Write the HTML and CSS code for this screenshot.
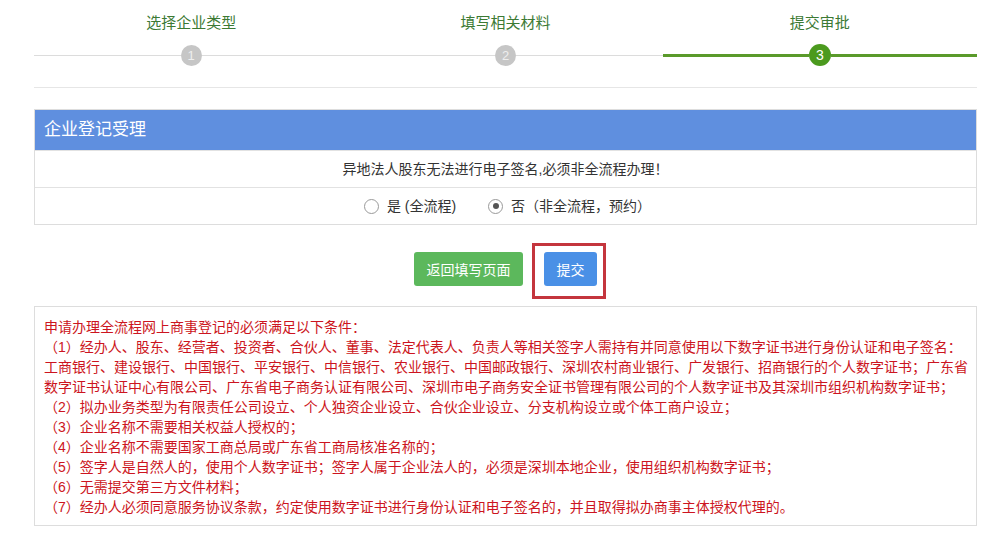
FILE: index.html
```html
<!DOCTYPE html>
<html><head>
<meta charset="utf-8">
<meta name="viewport" content="width=device-width, initial-scale=1.0">
<title>企业登记受理</title>
<link rel="stylesheet" href="styles.css">
</head>
<body>
<div class="page">
  <div class="steps">
    <div class="step">
      <div class="step_label">选择企业类型</div>
      <div class="step_track"><span class="seg"></span><span class="dot">1</span><span class="seg"></span></div>
    </div>
    <div class="step">
      <div class="step_label">填写相关材料</div>
      <div class="step_track"><span class="seg"></span><span class="dot">2</span><span class="seg"></span></div>
    </div>
    <div class="step on">
      <div class="step_label">提交审批</div>
      <div class="step_track"><span class="seg"></span><span class="dot">3</span><span class="seg"></span></div>
    </div>
  </div>
  <div class="rule"></div>

  <div class="panel">
    <div class="panel_head">企业登记受理</div>
    <div class="panel_row">异地法人股东无法进行电子签名,必须非全流程办理！</div>
    <div class="panel_row radios">
      <label class="opt"><span class="radio"></span>是 (全流程)</label>
      <label class="opt"><span class="radio checked"></span>否（非全流程，预约）</label>
    </div>
  </div>

  <div class="actions">
    <button class="btn btn_green">返回填写页面</button>
    <button class="btn btn_blue marked">提交</button>
  </div>

  <div class="notice">
    申请办理全流程网上商事登记的必须满足以下条件：<br>
    （1）经办人、股东、经营者、投资者、合伙人、董事、法定代表人、负责人等相关签字人需持有并同意使用以下数字证书进行身份认证和电子签名：<br>
    工商银行、建设银行、中国银行、平安银行、中信银行、农业银行、中国邮政银行、深圳农村商业银行、广发银行、招商银行的个人数字证书；广东省<br>数字证书认证中心有限公司、广东省电子商务认证有限公司、深圳市电子商务安全证书管理有限公司的个人数字证书及其深圳市组织机构数字证书；<br>
    （2）拟办业务类型为有限责任公司设立、个人独资企业设立、合伙企业设立、分支机构设立或个体工商户设立；<br>
    （3）企业名称不需要相关权益人授权的；<br>
    （4）企业名称不需要国家工商总局或广东省工商局核准名称的；<br>
    （5）签字人是自然人的，使用个人数字证书；签字人属于企业法人的，必须是深圳本地企业，使用组织机构数字证书；<br>
    （6）无需提交第三方文件材料；<br>
    （7）经办人必须同意服务协议条款，约定使用数字证书进行身份认证和电子签名的，并且取得拟办商事主体授权代理的。
  </div>
</div>
</body>
</html>
```

FILE: styles.css
```css
body {
  margin: 0;
  background: #fff;
  font-family: "Liberation Sans", "Noto Sans CJK SC", sans-serif;
  font-size: 14px;
  color: #333;
}
.page { padding: 0 31px 0 34px; }

/* steps */
.steps { display: grid; grid-template-columns: 1fr 1fr 1fr; }
.step { display: flex; flex-direction: column; align-items: stretch; }
.step_label {
  margin-top: 13px;
  line-height: 20px;
  font-size: 15px;
  color: #3c7a34;
  text-align: center;
}
.step_track {
  margin-top: 11px;
  height: 22px;
  display: flex;
  align-items: center;
}
.seg { flex: 1; height: 1px; background: #dcdcdc; }
.dot {
  width: 21px; height: 21px;
  border-radius: 50%;
  background: #c6c6c6;
  color: #eee;
  font-size: 13px;
  line-height: 21px;
  text-align: center;
}
.step.on .seg { height: 3px; background: #5a9a2a; }
.step.on .dot {
  width: 22px; height: 22px; line-height: 22px;
  background: #4b9a1e;
  color: #fff;
  font-size: 14px;
}
.rule { margin-top: 21px; height: 1px; background: #e6e6e6; }

/* panel */
.panel { margin-top: 21px; border: 1px solid #dddddd; }
.panel_head {
  background: #5f8fdf;
  color: #fff;
  font-size: 17px;
  height: 40px;
  line-height: 40px;
  padding-left: 9px;
}
.panel_row {
  height: 36px;
  line-height: 36px;
  text-align: center;
  border-top: 1px solid #e2e2e2;
}
.radios { display: flex; justify-content: center; gap: 32px; padding-left: 4px; }
.opt { display: flex; align-items: center; gap: 8px; }
.radio {
  width: 15px; height: 15px;
  border: 1px solid #9a9a9a;
  border-radius: 50%;
  background: #fff;
  box-sizing: border-box;
  position: relative;
}
.radio.checked::after {
  content: "";
  position: absolute;
  left: 3.5px; top: 3.5px;
  width: 6px; height: 6px;
  border-radius: 50%;
  background: #555;
}

/* buttons */
.actions {
  margin-top: 27px;
  display: flex;
  justify-content: center;
  gap: 21px;
}
.btn {
  height: 34px;
  border: 0;
  border-radius: 3px;
  color: #fff;
  font-family: inherit;
  font-size: 14px;
  padding: 0 12px;
  cursor: pointer;
}
.btn_green { background: #5cb85c; width: 109px; }
.btn_blue { background: #4a90e6; width: 53px; }
.marked { position: relative; }
.marked::after {
  content: "";
  position: absolute;
  left: -12px; right: -9px; top: -9px; bottom: -13px;
  border: 3px solid #c4353d;
}

/* notice */
.notice {
  margin-top: 20px;
  border: 1px solid #dddddd;
  padding: 10px 8px 8px 9px;
  line-height: 20px;
  color: #cc1420;
}
```
